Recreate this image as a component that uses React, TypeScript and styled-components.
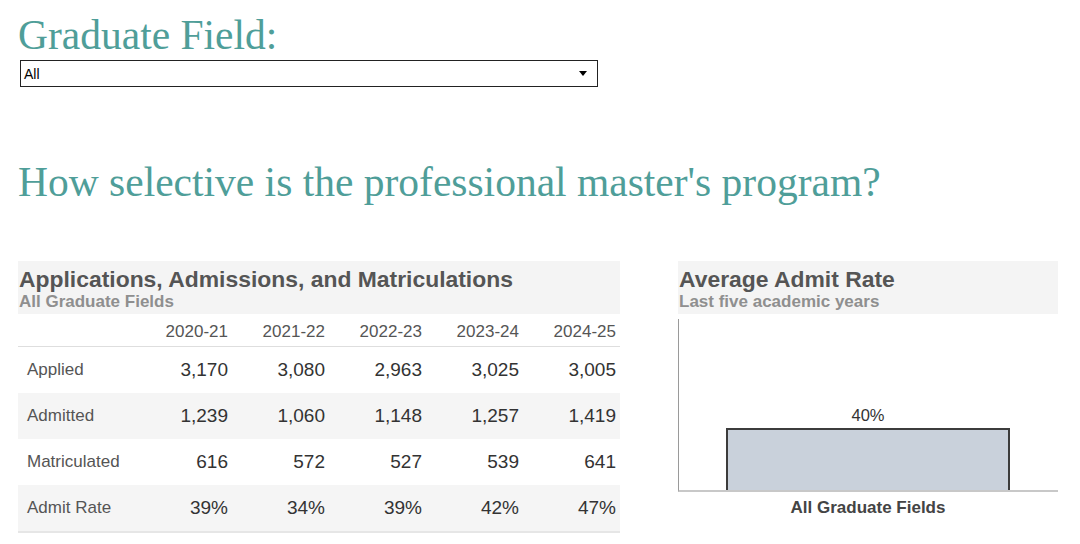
import React from 'react';
import styled, { createGlobalStyle } from 'styled-components';

const years = ['2020-21', '2021-22', '2022-23', '2023-24', '2024-25'];

const rows = [
    { label: 'Applied', values: ['3,170', '3,080', '2,963', '3,025', '3,005'] },
    { label: 'Admitted', values: ['1,239', '1,060', '1,148', '1,257', '1,419'] },
    { label: 'Matriculated', values: ['616', '572', '527', '539', '641'] },
    { label: 'Admit Rate', values: ['39%', '34%', '39%', '42%', '47%'] },
];

const averageRate = 40;

const App: React.FC = () => (
    <Page>
        <GlobalStyle />
        <PageHeading>Graduate Field:</PageHeading>
        <FieldSelect>
            <span>All</span>
            <svg width="8" height="5" viewBox="0 0 8 5">
                <path d="M0 0 H8 L4 5 Z" fill="#000" />
            </svg>
        </FieldSelect>
        <Question>How selective is the professional master&apos;s program?</Question>
        <Panels>
            <TablePanel>
                <PanelHeader>
                    <PanelTitle>Applications, Admissions, and Matriculations</PanelTitle>
                    <PanelSubtitle>All Graduate Fields</PanelSubtitle>
                </PanelHeader>
                <DataTable>
                    <HeadRow>
                        <LabelCell />
                        {years.map((y) => (
                            <YearCell key={y}>{y}</YearCell>
                        ))}
                    </HeadRow>
                    {rows.map((row, i) => (
                        <BodyRow key={row.label} shaded={i % 2 === 1}>
                            <LabelCell>{row.label}</LabelCell>
                            {row.values.map((v, j) => (
                                <ValueCell key={j}>{v}</ValueCell>
                            ))}
                        </BodyRow>
                    ))}
                </DataTable>
            </TablePanel>
            <ChartPanel>
                <PanelHeader>
                    <PanelTitle>Average Admit Rate</PanelTitle>
                    <PanelSubtitle>Last five academic years</PanelSubtitle>
                </PanelHeader>
                <Plot>
                    <BarColumn>
                        <BarLabel>{averageRate}%</BarLabel>
                        <Bar />
                    </BarColumn>
                </Plot>
                <AxisLabel>All Graduate Fields</AxisLabel>
            </ChartPanel>
        </Panels>
    </Page>
);

export default App;

const GlobalStyle = createGlobalStyle`
    body {
        margin: 0;
        background: #ffffff;
        font-family: "Liberation Sans", Arial, sans-serif;
    }
`;

const Page = styled.div`
    padding: 13px 18px 0 18px;
    width: 1080px;
    box-sizing: border-box;
`;

const PageHeading = styled.h1`
    margin: 0;
    font-family: "Liberation Serif", "Times New Roman", serif;
    font-weight: normal;
    font-size: 41.5px;
    line-height: 44px;
    color: #4f9e99;
`;

const FieldSelect = styled.div`
    margin: 3px 0 0 2px;
    width: 578px;
    height: 27px;
    box-sizing: border-box;
    border: 1px solid #222;
    display: flex;
    align-items: center;
    justify-content: space-between;
    padding: 0 10px 0 3px;
    font-size: 14px;
    color: #000;
`;

const Question = styled.h2`
    margin: 73px 0 0 0;
    font-family: "Liberation Serif", "Times New Roman", serif;
    font-weight: normal;
    font-size: 41.5px;
    line-height: 44px;
    color: #4f9e99;
`;

const Panels = styled.div`
    margin-top: 57px;
    display: flex;
    gap: 58px;
    align-items: flex-start;
`;

const TablePanel = styled.div`
    width: 602px;
`;

const ChartPanel = styled.div`
    width: 380px;
    display: flex;
    flex-direction: column;
`;

const PanelHeader = styled.div`
    background: #f4f4f4;
    height: 53px;
    box-sizing: border-box;
    padding: 6px 0 0 1px;
`;

const PanelTitle = styled.div`
    font-size: 22.9px;
    line-height: 24px;
    font-weight: bold;
    color: #555555;
`;

const PanelSubtitle = styled.div`
    margin-top: 1px;
    font-size: 17px;
    line-height: 20px;
    font-weight: bold;
    color: #8f8f8f;
`;

const DataTable = styled.div`
    display: flex;
    flex-direction: column;
    border-bottom: 2px solid #e6e6e6;
`;

const HeadRow = styled.div`
    display: grid;
    grid-template-columns: 117px repeat(5, 97px);
    height: 33px;
    box-sizing: border-box;
    padding-top: 4px;
    border-bottom: 1px solid #dedede;
    line-height: 28px;
`;

const BodyRow = styled.div<{ shaded: boolean }>`
    display: grid;
    grid-template-columns: 117px repeat(5, 97px);
    height: 46px;
    line-height: 46px;
    background: ${({ shaded }) => (shaded ? '#f5f5f5' : '#ffffff')};
`;

const LabelCell = styled.div`
    padding-left: 9px;
    font-size: 17px;
    color: #555555;
`;

const YearCell = styled.div`
    text-align: right;
    padding-right: 4px;
    font-size: 17px;
    color: #555555;
`;

const ValueCell = styled.div`
    text-align: right;
    padding-right: 4px;
    font-size: 19px;
    color: #333333;
`;

const Plot = styled.div`
    margin-top: 5px;
    height: 173px;
    box-sizing: border-box;
    border-left: 1px solid #9a9a9a;
    border-bottom: 2px solid #c8c8c8;
    display: flex;
    align-items: flex-end;
    justify-content: center;
    padding-right: 1px;
`;

const BarColumn = styled.div`
    width: 284px;
    display: flex;
    flex-direction: column;
    align-items: center;
`;

const BarLabel = styled.div`
    font-size: 16.5px;
    line-height: 18px;
    color: #333333;
    margin-bottom: 4px;
`;

const Bar = styled.div`
    width: 100%;
    height: 62px;
    box-sizing: border-box;
    background: #c9d1db;
    border: 2px solid #3c3c3c;
    border-bottom: none;
`;

const AxisLabel = styled.div`
    margin-top: 6px;
    text-align: center;
    font-size: 17px;
    line-height: 20px;
    font-weight: bold;
    color: #444444;
`;
